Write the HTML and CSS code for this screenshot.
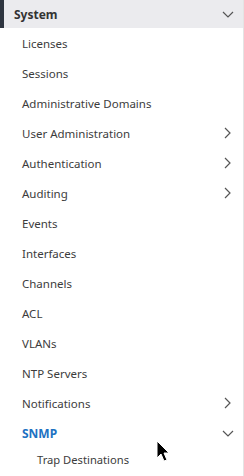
FILE: index.html
```html
<!DOCTYPE html>
<html lang="en">
<head>
    <meta charset="UTF-8">
    <meta name="viewport" content="width=device-width, initial-scale=1.0">
    <title>System Menu</title>
    <link rel="stylesheet" href="styles.css">
</head>
<body>
    <div class="menu">
        <!-- Section header -->
        <div class="menu-header">
            <span>System</span>
            <svg class="chev" width="12" height="7" viewBox="0 0 12 7"><path d="M1 1l5 5 5-5" fill="none" stroke="#555" stroke-width="1.2"/></svg>
        </div>

        <div class="item">Licenses</div>
        <div class="item">Sessions</div>
        <div class="item">Administrative Domains</div>
        <div class="item">User Administration
            <svg class="chev" width="7" height="12" viewBox="0 0 7 12"><path d="M1 1l5 5-5 5" fill="none" stroke="#555" stroke-width="1.2"/></svg>
        </div>
        <div class="item">Authentication
            <svg class="chev" width="7" height="12" viewBox="0 0 7 12"><path d="M1 1l5 5-5 5" fill="none" stroke="#555" stroke-width="1.2"/></svg>
        </div>
        <div class="item">Auditing
            <svg class="chev" width="7" height="12" viewBox="0 0 7 12"><path d="M1 1l5 5-5 5" fill="none" stroke="#555" stroke-width="1.2"/></svg>
        </div>
        <div class="item">Events</div>
        <div class="item">Interfaces</div>
        <div class="item">Channels</div>
        <div class="item">ACL</div>
        <div class="item">VLANs</div>
        <div class="item">NTP Servers</div>
        <div class="item">Notifications
            <svg class="chev" width="7" height="12" viewBox="0 0 7 12"><path d="M1 1l5 5-5 5" fill="none" stroke="#555" stroke-width="1.2"/></svg>
        </div>
        <div class="item active">SNMP
            <svg class="chev down" width="12" height="7" viewBox="0 0 12 7"><path d="M1 1l5 5 5-5" fill="none" stroke="#555" stroke-width="1.2"/></svg>
        </div>
        <div class="subitem">Trap Destinations</div>

        <!-- mouse pointer -->
        <svg class="pointer" width="14" height="22" viewBox="0 0 14 22"><path d="M1 1v17l4-4 3 7 3-1-3-7h5z" fill="#000" stroke="#fff" stroke-width="1"/></svg>
    </div>
</body>
</html>
```

FILE: styles.css
```css
body {
    margin: 0;
    font-family: "Noto Sans", "Open Sans", sans-serif;
    background: #fff;
}
.menu {
    position: relative;
    width: 243px;
    height: 476px;
    border-right: 1px solid #e4e4e4;
    overflow: hidden;
}
.menu-header {
    display: flex;
    justify-content: space-between;
    align-items: center;
    height: 28px;
    padding: 0 9px 0 10px;
    background: #ebebee;
    border-left: 4px solid #2e3540;
    box-sizing: border-box;
    font-size: 12px;
    font-weight: bold;
    color: #333;
    margin-bottom: 0;
}
.item {
    display: flex;
    justify-content: space-between;
    align-items: center;
    height: 30px;
    padding: 0 12px 0 22px;
    font-size: 11.5px;
    color: #3c3c3c;
}
.item .down {
    margin-right: -3px;
}
.item.active {
    color: #1d72c2;
    font-weight: bold;
    font-size: 12px;
}
.subitem {
    padding: 4px 0 0 37px;
    font-size: 11.2px;
    color: #3c3c3c;
}
.pointer {
    position: absolute;
    left: 156px;
    top: 440px;
}
```
